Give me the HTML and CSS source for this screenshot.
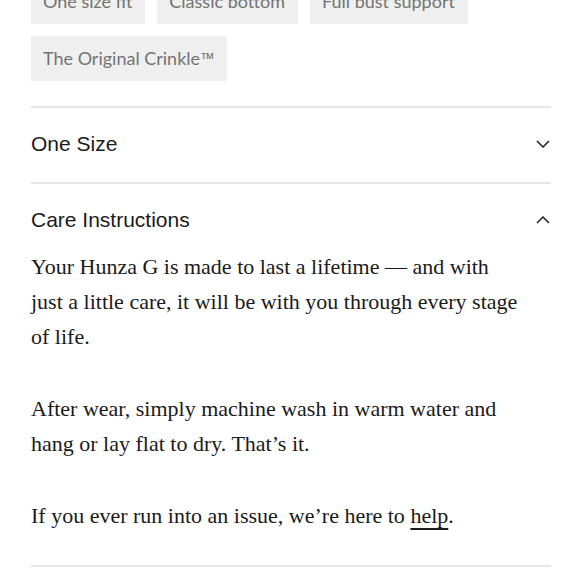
FILE: index.html
```html
<!DOCTYPE html>
<html>
<head>
<meta charset="utf-8">
<link rel="stylesheet" href="styles.css">
</head>
<body>
<div class="page">
  <div class="tags">
    <span class="tag">One size fit</span>
    <span class="tag">Classic bottom</span>
    <span class="tag">Full bust support</span>
    <span class="tag">The Original Crinkle<span class="tm">™</span></span>
  </div>
  <div class="acc">
    <div class="acc-item">
      <div class="acc-head">
        <span>One Size</span>
        <svg class="chev" width="14" height="8" viewBox="0 0 14 8"><path d="M1 1 L7 7 L13 1" fill="none" stroke="#222" stroke-width="1.5"/></svg>
      </div>
    </div>
    <div class="acc-item acc-open">
      <div class="acc-head">
        <span>Care Instructions</span>
        <svg class="chev" width="14" height="8" viewBox="0 0 14 8"><path d="M1 7 L7 1 L13 7" fill="none" stroke="#222" stroke-width="1.5"/></svg>
      </div>
      <div class="acc-body">
        <p>Your Hunza G is made to last a lifetime — and with just a little care, it will be with you through every stage of life.</p>
        <p>After wear, simply machine wash in warm water and hang or lay flat to dry. That’s it.</p>
        <p>If you ever run into an issue, we’re here to <a href="#">help</a>.</p>
      </div>
    </div>
  </div>
</div>
</body>
</html>
```
FILE: styles.css
```css
html, body { margin: 0; padding: 0; background: #fff; }
.page {
  width: 520px;
  margin: -21px 0 0 31px;
}
.tags {
  display: flex;
  flex-wrap: wrap;
  gap: 12px 12px;
}
.tag {
  background: #efefef;
  color: #737373;
  font-family: Lato, "Open Sans", sans-serif;
  font-size: 18px;
  line-height: 21px;
  padding: 12px 13px 12px 12px;
}
.tm { font-family: "Open Sans", sans-serif; font-size: 0.95em; line-height: 0; margin-left: 1px; }
.acc { margin-top: 25px; }
.acc-item {
  border-top: 2px solid #e6e6e6;
}
.acc-item:last-child { border-bottom: 2px solid #e6e6e6; }
.acc-head {
  display: flex;
  justify-content: space-between;
  align-items: center;
  padding: 25px 0 27px;
  font-family: "Liberation Sans", Arial, sans-serif;
  font-size: 21px;
  line-height: 22px;
  color: #1a1a1a;
}
.chev { margin-right: 1px; }
.acc-open .acc-head { padding-bottom: 18px; }
.acc-body {
  font-family: "Liberation Serif", serif;
  font-size: 22px;
  line-height: 35px;
  color: #1a1a1a;
  padding-bottom: 32px;
}
.acc-body p { margin: 0 0 37px; max-width: 492px; }
.acc-body p:last-child { margin-bottom: 0; }
.acc-body a {
  color: inherit;
  text-decoration: underline;
  text-decoration-thickness: 1.5px;
  text-underline-offset: 5px;
}
```
